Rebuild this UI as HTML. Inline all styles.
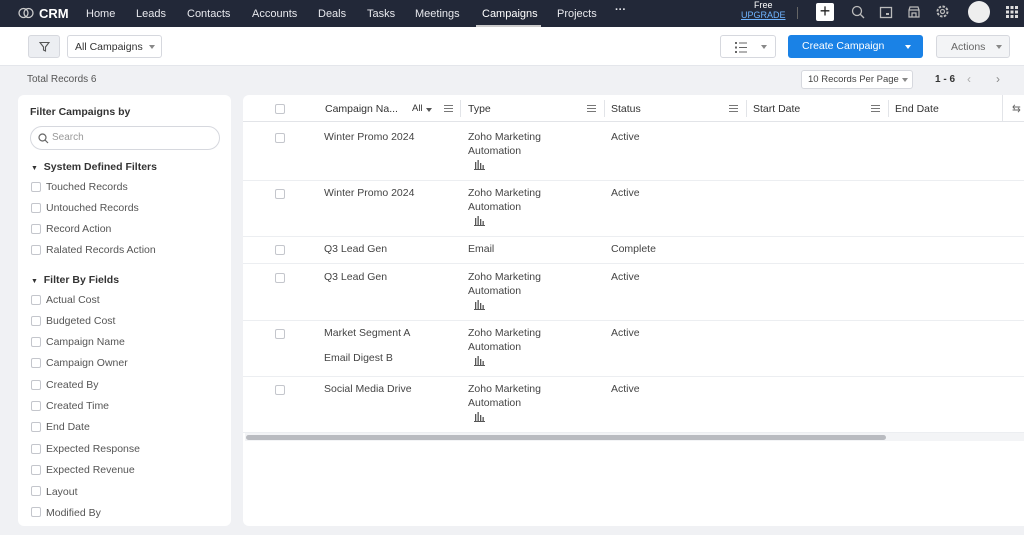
<!DOCTYPE html>
<html><head><meta charset="utf-8"><style>
*{box-sizing:border-box;margin:0;padding:0}
body{width:1024px;height:535px;overflow:hidden;background:#f0f1f4;font-family:"Liberation Sans",sans-serif;font-size:11px;color:#333;position:relative}
.nav{position:absolute;left:0;top:0;width:1024px;height:27px;background:#222838;color:#e8e9ee;font-size:11px}
.nav span{position:absolute;top:8px}
.tb{position:absolute;left:0;top:27px;width:1024px;height:39px;background:#fff;border-bottom:1px solid #e4e6eb}
.btn{position:absolute;border:1px solid #d6d8de;border-radius:3px;background:#fff}
.card{position:absolute;background:#fff;border-radius:6px}
.cb{position:absolute;width:10px;height:10px;border:1px solid #c4c6cc;border-radius:2px;background:#fff}
.side div.t{position:absolute;left:46px;color:#555;font-size:10.5px}
.side .cb{left:31px}
.hdr{position:absolute;top:103px;font-size:10.5px;color:#333}
.cell{position:absolute;font-size:10.5px;color:#444;line-height:14px}
.rl{position:absolute;left:243px;width:781px;height:1px;background:#eceef1}
.ham{position:absolute;width:9px;height:7px;border-top:1px solid #777;border-bottom:1px solid #777}
.ham:after{content:"";position:absolute;left:0;top:2px;width:9px;height:1px;background:#777}
.bar{position:absolute}
.arr{position:absolute;width:0;height:0;border-left:3px solid transparent;border-right:3px solid transparent;border-top:4px solid #888}
</style></head><body>
<div class="nav">
<svg style="position:absolute;left:18px;top:7px" width="16" height="12" viewBox="0 0 16 12"><circle cx="5.5" cy="6" r="4.5" fill="none" stroke="#ccc" stroke-width="1.3"/><circle cx="10.5" cy="6" r="4.5" fill="none" stroke="#ccc" stroke-width="1.3"/></svg>
<span style="left:39px;top:6px;font-size:13px;font-weight:bold;color:#fff">CRM</span>
<span style="left:86px">Home</span><span style="left:136px">Leads</span><span style="left:187px">Contacts</span><span style="left:252px">Accounts</span><span style="left:318px">Deals</span><span style="left:367px">Tasks</span><span style="left:415px">Meetings</span><span style="left:482px;color:#fff">Campaigns</span><span style="left:557px">Projects</span><span style="left:615px;top:4px;font-weight:bold">···</span>
<div style="position:absolute;left:476px;top:25px;width:65px;height:2px;background:#ccc"></div>
<span style="left:754px;top:0px;font-size:9px;color:#fff">Free</span>
<span style="left:741px;top:10px;font-size:9px;color:#6fb4ff;text-decoration:underline">UPGRADE</span>
<div style="position:absolute;left:797px;top:7px;width:1px;height:12px;background:#666"></div>
<div style="position:absolute;left:816px;top:3px;width:18px;height:18px;background:#fff;border-radius:2px;color:#222;font-size:18px;line-height:17px;text-align:center">+</div>
<svg style="position:absolute;left:851px;top:5px" width="14" height="14"><circle cx="6" cy="6" r="4.5" fill="none" stroke="#bbb" stroke-width="1.3"/><line x1="9" y1="9" x2="13" y2="13" stroke="#bbb" stroke-width="1.3"/></svg>
<svg style="position:absolute;left:879px;top:5px" width="14" height="14"><rect x="1.5" y="2.5" width="11" height="10" fill="none" stroke="#bbb" stroke-width="1.3"/><rect x="7" y="8" width="3" height="2" fill="#bbb"/></svg>
<svg style="position:absolute;left:907px;top:5px" width="14" height="14"><path d="M2 5 L3 2 H11 L12 5 V12 H2 Z M2 5 H12 M5 12 V8 H9 V12" fill="none" stroke="#bbb" stroke-width="1.2"/></svg>
<svg style="position:absolute;left:935px;top:4px" width="15" height="15"><circle cx="7.5" cy="7.5" r="5" fill="none" stroke="#bbb" stroke-width="2" stroke-dasharray="2.5 1.4"/><circle cx="7.5" cy="7.5" r="2" fill="none" stroke="#bbb" stroke-width="1.2"/></svg>
<div style="position:absolute;left:968px;top:1px;width:22px;height:22px;border-radius:50%;background:#eee"></div>
<svg style="position:absolute;left:1006px;top:6px" width="12" height="12"><g fill="#ddd"><rect x="0" y="0" width="3" height="3"/><rect x="4.5" y="0" width="3" height="3"/><rect x="9" y="0" width="3" height="3"/><rect x="0" y="4.5" width="3" height="3"/><rect x="4.5" y="4.5" width="3" height="3"/><rect x="9" y="4.5" width="3" height="3"/><rect x="0" y="9" width="3" height="3"/><rect x="4.5" y="9" width="3" height="3"/><rect x="9" y="9" width="3" height="3"/></g></svg>
</div>
<div class="tb">
<div class="btn" style="left:28px;top:8px;width:32px;height:23px;background:#eceef2"><svg style="position:absolute;left:10px;top:5px" width="11" height="11"><path d="M1 1.5 H10 L6.5 6 V10 L4.5 9 V6 Z" fill="none" stroke="#555" stroke-width="1.1"/></svg></div>
<div class="btn" style="left:67px;top:8px;width:95px;height:23px"><span style="position:absolute;left:7px;top:5px;font-size:10.5px;color:#333">All Campaigns</span><span class="arr" style="left:81px;top:9px"></span></div>
<div class="btn" style="left:720px;top:8px;width:56px;height:23px"><svg style="position:absolute;left:14px;top:6px" width="12" height="11"><g fill="#666"><rect x="0" y="0" width="2" height="2"/><rect x="0" y="4.5" width="2" height="2"/><rect x="0" y="9" width="2" height="2"/><rect x="4" y="0.5" width="8" height="1"/><rect x="4" y="5" width="8" height="1"/><rect x="4" y="9.5" width="8" height="1"/></g></svg><span class="arr" style="left:40px;top:9px"></span></div>
<div style="position:absolute;left:788px;top:8px;width:135px;height:23px;background:#1a82e6;border-radius:3px;color:#fff"><span style="position:absolute;left:14px;top:5px;font-size:10.5px">Create Campaign</span><span class="arr" style="left:117px;top:10px;border-top-color:#fff"></span></div>
<div class="btn" style="left:936px;top:8px;width:74px;height:23px;background:#f3f4f6"><span style="position:absolute;left:14px;top:5px;font-size:10.5px;color:#666">Actions</span><span class="arr" style="left:59px;top:9px"></span></div>
</div>
<div style="position:absolute;left:27px;top:74px;font-size:10px;color:#555">Total Records 6</div>
<div class="btn" style="left:801px;top:70px;width:112px;height:19px"><span style="position:absolute;left:6px;top:3px;font-size:9.5px;color:#444">10 Records Per Page</span><span class="arr" style="left:100px;top:7px"></span></div>
<div style="position:absolute;left:935px;top:74px;font-size:10px;font-weight:bold;color:#333">1 - 6</div>
<div style="position:absolute;left:967px;top:72px;font-size:12px;color:#aaa">‹</div>
<div style="position:absolute;left:996px;top:72px;font-size:12px;color:#888">›</div>

<div class="card side" style="left:18px;top:95px;width:213px;height:431px">
<div style="position:absolute;left:12px;top:11px;font-size:10.5px;font-weight:bold;color:#333">Filter Campaigns by</div>
<div style="position:absolute;left:12px;top:31px;width:190px;height:24px;border:1px solid #d6d8de;border-radius:12px"><svg style="position:absolute;left:7px;top:6px" width="11" height="11"><circle cx="4.5" cy="4.5" r="3.5" fill="none" stroke="#666" stroke-width="1.2"/><line x1="7" y1="7" x2="10" y2="10" stroke="#666" stroke-width="1.2"/></svg><span style="position:absolute;left:21px;top:5px;font-size:10px;color:#999">Search</span></div>
</div>
<div class="side">
<div style="position:absolute;left:31px;top:161px;font-size:10.5px;font-weight:bold;color:#333"><span style="font-size:7px">▼</span>&nbsp; System Defined Filters</div>
<div class="cb" style="top:182px"></div><div class="t" style="top:181px">Touched Records</div>
<div class="cb" style="top:203px"></div><div class="t" style="top:202px">Untouched Records</div>
<div class="cb" style="top:224px"></div><div class="t" style="top:223px">Record Action</div>
<div class="cb" style="top:245px"></div><div class="t" style="top:244px">Ralated Records Action</div>
<div style="position:absolute;left:31px;top:274px;font-size:10.5px;font-weight:bold;color:#333"><span style="font-size:7px">▼</span>&nbsp; Filter By Fields</div>
<div class="cb" style="top:295px"></div><div class="t" style="top:294px">Actual Cost</div>
<div class="cb" style="top:316px"></div><div class="t" style="top:315px">Budgeted Cost</div>
<div class="cb" style="top:337px"></div><div class="t" style="top:336px">Campaign Name</div>
<div class="cb" style="top:358px"></div><div class="t" style="top:357px">Campaign Owner</div>
<div class="cb" style="top:380px"></div><div class="t" style="top:379px">Created By</div>
<div class="cb" style="top:401px"></div><div class="t" style="top:400px">Created Time</div>
<div class="cb" style="top:422px"></div><div class="t" style="top:421px">End Date</div>
<div class="cb" style="top:444px"></div><div class="t" style="top:443px">Expected Response</div>
<div class="cb" style="top:465px"></div><div class="t" style="top:464px">Expected Revenue</div>
<div class="cb" style="top:486px"></div><div class="t" style="top:486px">Layout</div>
<div class="cb" style="top:507px"></div><div class="t" style="top:507px">Modified By</div>
</div>

<div class="card" style="left:243px;top:95px;width:800px;height:431px"></div>
<div class="rl" style="top:121px;background:#e2e4e8"></div>
<div class="cb" style="left:275px;top:104px"></div>
<div class="hdr" style="left:325px">Campaign Na...</div>
<div class="hdr" style="left:412px;font-size:9.5px">All</div><span class="arr" style="left:426px;top:108px;border-top-color:#555"></span>
<div class="ham" style="left:444px;top:105px"></div>
<div style="position:absolute;left:460px;top:100px;width:1px;height:17px;background:#e2e4e8"></div>
<div class="hdr" style="left:468px">Type</div><div class="ham" style="left:587px;top:105px"></div>
<div style="position:absolute;left:604px;top:100px;width:1px;height:17px;background:#e2e4e8"></div>
<div class="hdr" style="left:611px">Status</div><div class="ham" style="left:729px;top:105px"></div>
<div style="position:absolute;left:746px;top:100px;width:1px;height:17px;background:#e2e4e8"></div>
<div class="hdr" style="left:753px">Start Date</div><div class="ham" style="left:871px;top:105px"></div>
<div style="position:absolute;left:888px;top:100px;width:1px;height:17px;background:#e2e4e8"></div>
<div class="hdr" style="left:895px">End Date</div>
<div style="position:absolute;left:1002px;top:95px;width:1px;height:26px;background:#e2e4e8"></div>
<div class="hdr" style="left:1012px;color:#666">⇆</div>

<div class="cb" style="left:275px;top:133px"></div><div class="cell" style="left:324px;top:130px">Winter Promo 2024</div><div class="cell" style="left:468px;top:130px">Zoho Marketing<br>Automation</div><svg class="bar" style="left:474px;top:160px" width="11" height="10"><g fill="#555"><rect x="0" y="9" width="11" height="1"/><rect x="1" y="2" width="1.3" height="7"/><rect x="3.5" y="0" width="1.3" height="9"/><rect x="6" y="3" width="1.3" height="6"/><rect x="8.5" y="5" width="1.3" height="4"/></g></svg><div class="cell" style="left:611px;top:130px">Active</div>
<div class="rl" style="top:180px"></div>
<div class="cb" style="left:275px;top:189px"></div><div class="cell" style="left:324px;top:186px">Winter Promo 2024</div><div class="cell" style="left:468px;top:186px">Zoho Marketing<br>Automation</div><svg class="bar" style="left:474px;top:216px" width="11" height="10"><g fill="#555"><rect x="0" y="9" width="11" height="1"/><rect x="1" y="2" width="1.3" height="7"/><rect x="3.5" y="0" width="1.3" height="9"/><rect x="6" y="3" width="1.3" height="6"/><rect x="8.5" y="5" width="1.3" height="4"/></g></svg><div class="cell" style="left:611px;top:186px">Active</div>
<div class="rl" style="top:236px"></div>
<div class="cb" style="left:275px;top:245px"></div><div class="cell" style="left:324px;top:242px">Q3 Lead Gen</div><div class="cell" style="left:468px;top:242px">Email</div><div class="cell" style="left:611px;top:242px">Complete</div>
<div class="rl" style="top:263px"></div>
<div class="cb" style="left:275px;top:273px"></div><div class="cell" style="left:324px;top:270px">Q3 Lead Gen</div><div class="cell" style="left:468px;top:270px">Zoho Marketing<br>Automation</div><svg class="bar" style="left:474px;top:300px" width="11" height="10"><g fill="#555"><rect x="0" y="9" width="11" height="1"/><rect x="1" y="2" width="1.3" height="7"/><rect x="3.5" y="0" width="1.3" height="9"/><rect x="6" y="3" width="1.3" height="6"/><rect x="8.5" y="5" width="1.3" height="4"/></g></svg><div class="cell" style="left:611px;top:270px">Active</div>
<div class="rl" style="top:320px"></div>
<div class="cb" style="left:275px;top:329px"></div><div class="cell" style="left:324px;top:326px">Market Segment A</div><div class="cell" style="left:324px;top:351px">Email Digest B</div><div class="cell" style="left:468px;top:326px">Zoho Marketing<br>Automation</div><svg class="bar" style="left:474px;top:356px" width="11" height="10"><g fill="#555"><rect x="0" y="9" width="11" height="1"/><rect x="1" y="2" width="1.3" height="7"/><rect x="3.5" y="0" width="1.3" height="9"/><rect x="6" y="3" width="1.3" height="6"/><rect x="8.5" y="5" width="1.3" height="4"/></g></svg><div class="cell" style="left:611px;top:326px">Active</div>
<div class="rl" style="top:376px"></div>
<div class="cb" style="left:275px;top:385px"></div><div class="cell" style="left:324px;top:382px">Social Media Drive</div><div class="cell" style="left:468px;top:382px">Zoho Marketing<br>Automation</div><svg class="bar" style="left:474px;top:412px" width="11" height="10"><g fill="#555"><rect x="0" y="9" width="11" height="1"/><rect x="1" y="2" width="1.3" height="7"/><rect x="3.5" y="0" width="1.3" height="9"/><rect x="6" y="3" width="1.3" height="6"/><rect x="8.5" y="5" width="1.3" height="4"/></g></svg><div class="cell" style="left:611px;top:382px">Active</div>
<div class="rl" style="top:432px"></div>
<div style="position:absolute;left:245px;top:433px;width:779px;height:8px;background:#f3f4f6"></div>
<div style="position:absolute;left:246px;top:435px;width:640px;height:5px;background:#b9bbc0;border-radius:3px"></div>
</body></html>
